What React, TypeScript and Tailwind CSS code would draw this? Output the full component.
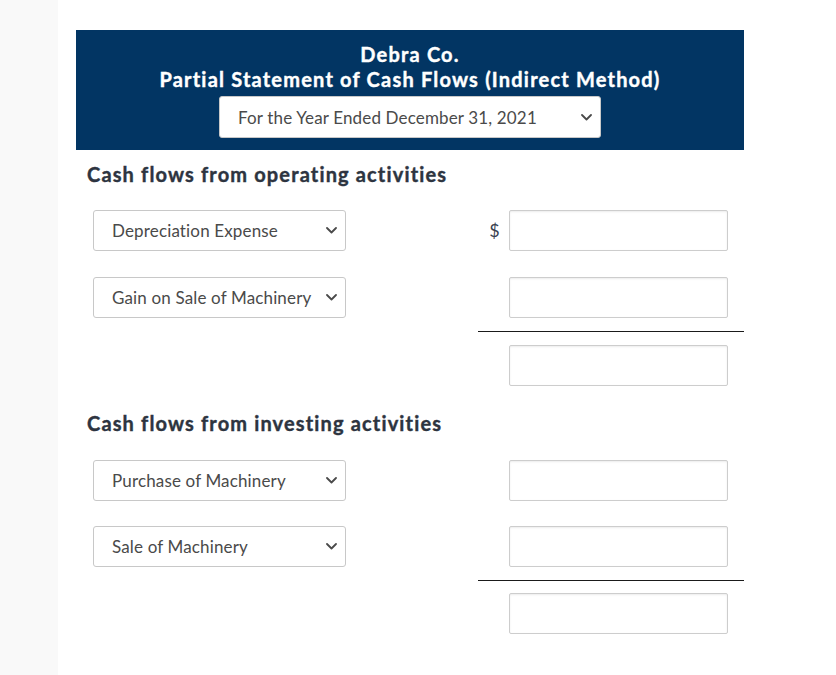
import React from 'react';

const Chevron = () => (
  <svg width="11" height="7" viewBox="0 0 11 7" fill="none" className="shrink-0">
    <polyline points="1,1 5.5,5.5 10,1" stroke="#4a4a4a" strokeWidth="1.8" strokeLinecap="round" strokeLinejoin="round" />
  </svg>
);

function Select({ label, className = '' }: { label: string; className?: string }) {
  return (
    <div
      className={`flex items-center justify-between bg-white border border-[#c8c8c8] rounded-[3px] pl-[18px] pr-[8px] text-[17px] tracking-[0.15px] text-[#4a4a4a] ${className}`}
    >
      <span className="whitespace-nowrap">{label}</span>
      <Chevron />
    </div>
  );
}

function AmountBox() {
  return (
    <div className="w-[219px] h-[41px] bg-white border border-[#cdcdcd] rounded-[2px] shadow-[inset_0_1px_2px_rgba(0,0,0,0.08)]" />
  );
}

function Row({ label, dollar, className = '' }: { label?: string; dollar?: boolean; className?: string }) {
  return (
    <div className={`flex items-center h-[41px] ${className}`}>
      <div className="w-[402px] pl-[17px]">
        {label && <Select label={label} className="w-[253px] h-[41px]" />}
      </div>
      <div className="flex items-center w-[266px]">
        <div className="w-[31px] text-[18px] text-[#3a4250] text-center pl-[2px]">{dollar ? '$' : ''}</div>
        <AmountBox />
      </div>
    </div>
  );
}

function Rule({ className = '' }: { className?: string }) {
  return (
    <div className={`flex ${className}`}>
      <div className="w-[402px]" />
      <div className="w-[266px] h-px bg-[#1a1a1a]" />
    </div>
  );
}

export default function App() {
  return (
    <div className="flex min-h-[675px] bg-white" style={{ fontFamily: 'Lato, "Open Sans", sans-serif' }}>
      <div className="w-[58px] bg-[#f9f9f9] shrink-0" />
      <div className="pl-[18px] pt-[30px]">
        <div className="w-[668px]">
          <div className="bg-[#023563] pt-[12px] pb-[12px] flex flex-col items-center text-white font-bold text-[20px] leading-[25px]">
            <div className="tracking-[1.2px] [-webkit-text-stroke:0.4px]">Debra Co.</div>
            <div className="tracking-[1.2px] [-webkit-text-stroke:0.4px]">Partial Statement of Cash Flows (Indirect Method)</div>
            <Select
              label="For the Year Ended December 31, 2021"
              className="w-[382px] h-[42px] mt-[4px] font-normal rounded-[2px]"
            />
          </div>

          <h2 className="pl-[11px] mt-[12px] text-[20px] leading-[24px] font-bold tracking-[1.15px] [-webkit-text-stroke:0.4px] text-[#2d3440]">
            Cash flows from operating activities
          </h2>
          <Row label="Depreciation Expense" dollar className="mt-[24px]" />
          <Row label="Gain on Sale of Machinery" className="mt-[26px]" />
          <Rule className="mt-[13px]" />
          <Row className="mt-[13px]" />

          <h2 className="pl-[11px] mt-[25px] text-[20px] leading-[24px] font-bold tracking-[1.15px] [-webkit-text-stroke:0.4px] text-[#2d3440]">
            Cash flows from investing activities
          </h2>
          <Row label="Purchase of Machinery" className="mt-[25px]" />
          <Row label="Sale of Machinery" className="mt-[25px]" />
          <Rule className="mt-[13px]" />
          <Row className="mt-[12px]" />
        </div>
      </div>
    </div>
  );
}
